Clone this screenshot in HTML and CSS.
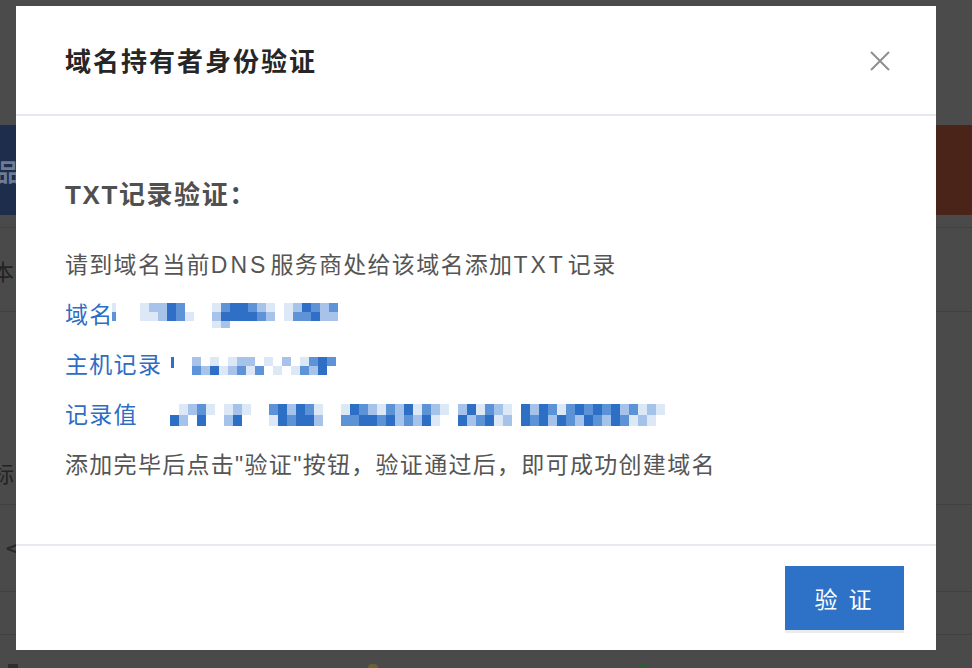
FILE: index.html
```html
<!DOCTYPE html>
<html lang="zh-CN">
<head>
<meta charset="utf-8">
<title>域名持有者身份验证</title>
<link rel="stylesheet" href="styles.css">
</head>
<body>
<div class="page">
  <div class="bg">
    <div class="bg-top"></div>
    <div class="bg-band">
      <div class="band-l"><span class="band-ch">品</span></div>
      <div class="band-r"></div>
    </div>
    <div class="bg-row r1"></div>
    <div class="bg-row r2"><span class="bg-ch">本</span></div>
    <div class="bg-row r3"><span class="bg-ch">标</span></div>
    <div class="bg-row r4"><span class="bg-arrow">&lt;</span></div>
    <div class="bg-row r5"></div>
    <div class="bg-foot">
      <span class="bf-box"></span>
      <span class="bf-dot yellow"></span>
      <span class="bf-dot green"></span>
    </div>
  </div>

  <div class="modal">
    <div class="modal-head">
      <h1 class="modal-title">域名持有者身份验证</h1>
      <button class="close" aria-label="关闭">
        <svg width="22" height="22" viewBox="0 0 22 22"><path d="M2 2L20 20M20 2L2 20" stroke="#8f8f8f" stroke-width="2" fill="none"/></svg>
      </button>
    </div>
    <div class="modal-body">
      <h2 class="sub">TXT记录验证：</h2>
      <p class="line">请到域名当前<span class="lat">DNS</span>服务商处给该域名添加<span class="lat">TXT</span>记录</p>
      <p class="line blue"><span>域名</span>
        <svg class="mosaic m-domain" width="232" height="28" viewBox="0 0 232 28">
          <path fill="#dde8f7" d="M0 2h4v9h-4zM28 2h9v9h-9zM100 2h9v9h-9zM154 2h9v9h-9zM172 2h9v9h-9zM28 11h9v9h-9zM37 11h9v9h-9zM73 11h9v9h-9zM172 11h9v9h-9zM100 20h9v7h-9z"/>
          <path fill="#a7c3ea" d="M37 2h9v9h-9zM46 2h9v9h-9zM145 2h9v9h-9zM181 2h9v9h-9zM208 2h9v9h-9zM46 11h9v9h-9zM100 11h9v9h-9zM154 11h9v9h-9zM208 11h9v9h-9zM217 11h9v9h-9zM109 20h9v7h-9z"/>
          <path fill="#5e93d7" d="M64 2h9v9h-9zM109 2h9v9h-9zM136 2h9v9h-9zM199 2h9v9h-9zM217 2h9v9h-9zM0 11h4v9h-4zM64 11h9v9h-9zM145 11h9v9h-9zM181 11h9v9h-9zM190 11h9v9h-9z"/>
          <path fill="#2f6fc6" d="M55 2h9v9h-9zM118 2h9v9h-9zM127 2h9v9h-9zM190 2h9v9h-9zM55 11h9v9h-9zM109 11h9v9h-9zM118 11h9v9h-9zM127 11h9v9h-9zM136 11h9v9h-9zM199 11h9v9h-9z"/>
        </svg>
      </p>
      <p class="line blue"><span>主机记录</span>
        <svg class="mosaic m-host" width="170" height="24" viewBox="0 0 170 24">
          <path fill="#2f6fc6" d="M1 4h3v11h-3zM40 13h9v9h-9zM148 4h9v9h-9zM148 13h9v9h-9z"/>
          <path fill="#5e93d7" d="M139 4h9v9h-9zM157 4h9v9h-9zM22 13h9v9h-9zM67 13h9v9h-9zM85 13h9v9h-9zM130 13h9v9h-9z"/>
          <path fill="#a7c3ea" d="M22 4h9v9h-9zM67 4h9v9h-9zM76 4h9v9h-9zM112 4h9v9h-9zM31 13h9v9h-9zM58 13h9v9h-9zM139 13h9v9h-9z"/>
          <path fill="#dde8f7" d="M40 4h9v9h-9zM58 4h9v9h-9zM94 4h9v9h-9zM130 4h9v9h-9zM49 13h9v9h-9zM76 13h9v9h-9zM103 13h9v9h-9zM121 13h9v9h-9z"/>
        </svg>
      </p>
      <p class="line blue"><span>记录值</span>
        <svg class="mosaic m-value" width="496" height="24" viewBox="0 0 496 24">
          <path fill="#dde8f7" d="M9 1h9v11h-9zM36 1h9v11h-9zM54 1h9v11h-9zM72 1h9v11h-9zM144 1h9v11h-9zM171 1h9v11h-9zM207 1h9v11h-9zM243 1h9v11h-9zM270 1h9v11h-9zM306 1h9v11h-9zM333 1h9v11h-9zM387 1h9v11h-9zM468 1h9v11h-9zM486 1h9v11h-9zM99 12h9v11h-9zM261 12h9v11h-9zM324 12h9v11h-9zM459 12h9v11h-9zM477 12h9v11h-9z"/>
          <path fill="#a5c3ea" d="M18 1h9v11h-9zM63 1h9v11h-9zM117 1h9v11h-9zM198 1h9v11h-9zM225 1h9v11h-9zM261 1h9v11h-9zM288 1h9v11h-9zM324 1h9v11h-9zM360 1h9v11h-9zM450 1h9v11h-9zM477 1h9v11h-9zM9 12h9v11h-9zM54 12h9v11h-9zM144 12h9v11h-9zM225 12h9v11h-9zM243 12h9v11h-9zM297 12h9v11h-9zM333 12h9v11h-9zM378 12h9v11h-9zM405 12h9v11h-9zM432 12h9v11h-9zM468 12h9v11h-9z"/>
          <path fill="#5c92d6" d="M27 1h9v11h-9zM99 1h9v11h-9zM135 1h9v11h-9zM189 1h9v11h-9zM216 1h9v11h-9zM252 1h9v11h-9zM315 1h9v11h-9zM378 1h9v11h-9zM396 1h9v11h-9zM414 1h9v11h-9zM432 1h9v11h-9zM459 1h9v11h-9zM117 12h9v11h-9zM171 12h9v11h-9zM180 12h9v11h-9zM207 12h9v11h-9zM234 12h9v11h-9zM306 12h9v11h-9zM360 12h9v11h-9zM396 12h9v11h-9zM423 12h9v11h-9zM450 12h9v11h-9z"/>
          <path fill="#2e6fc6" d="M108 1h9v11h-9zM126 1h9v11h-9zM180 1h9v11h-9zM234 1h9v11h-9zM297 1h9v11h-9zM351 1h9v11h-9zM369 1h9v11h-9zM405 1h9v11h-9zM423 1h9v11h-9zM441 1h9v11h-9zM0 12h9v11h-9zM27 12h9v11h-9zM63 12h9v11h-9zM108 12h9v11h-9zM126 12h9v11h-9zM135 12h9v11h-9zM189 12h9v11h-9zM198 12h9v11h-9zM216 12h9v11h-9zM252 12h9v11h-9zM288 12h9v11h-9zM315 12h9v11h-9zM351 12h9v11h-9zM369 12h9v11h-9zM387 12h9v11h-9zM414 12h9v11h-9zM441 12h9v11h-9z"/>
        </svg>
      </p>
      <p class="line">添加完毕后点击"验证"按钮，验证通过后，即可成功创建域名</p>
    </div>
    <div class="modal-foot">
      <button class="btn-primary">验 证</button>
    </div>
  </div>
</div>
</body>
</html>
```
FILE: styles.css
```css
* { box-sizing: border-box; }
html, body { margin: 0; padding: 0; }
body {
  width: 972px;
  height: 668px;
  overflow: hidden;
  background: #4a4a4a;
  font-family: "Liberation Sans", "Noto Sans CJK SC", sans-serif;
}
.page { position: relative; width: 972px; height: 668px; overflow: hidden; }

/* dimmed page behind the dialog */
.bg { display: flex; flex-direction: column; height: 100%; }
.bg-top { height: 125px; background: #4b4b4b; }
.bg-band { height: 90px; display: flex; }
.band-l { flex: 1; background: #1e2d4c; display: flex; align-items: center; }
.band-ch {
  font-family: "Noto Sans CJK SC", sans-serif;
  font-size: 24px; font-weight: 700; color: #6e7c93;
  margin-left: -4px;
}
.band-r { width: 400px; background: #4a2418; }
.bg-row { border-bottom: 1px solid #414141; display: flex; align-items: center; }
.r1 { height: 13px; }
.r2 { height: 84px; }
.r3 { height: 193px; align-items: flex-end; padding-bottom: 16px; }
.r4 { height: 87px; }
.r5 { height: 43px; }
.bg-ch {
  font-family: "Noto Sans CJK SC", sans-serif;
  font-size: 22px; color: #232323; margin-left: -8px;
}
.bg-arrow { font-size: 26px; color: #2a2a2a; margin-left: 4px; font-family: "DejaVu Sans", sans-serif; }
.bg-foot { flex: 1; display: flex; align-items: flex-end; padding-left: 8px; }
.bf-box { width: 10px; height: 4px; background: #2f2f2f; }
.bf-dot { width: 10px; height: 4px; border-radius: 5px 5px 0 0; }
.bf-dot.yellow { background: #6a6133; margin-left: 350px; }
.bf-dot.green { background: #2f5b35; margin-left: 260px; }

/* dialog */
.modal {
  position: absolute;
  left: 16px; top: 6px;
  width: 920px; height: 644px;
  background: #fff;
  display: flex; flex-direction: column;
}
.modal-head {
  height: 110px;
  border-bottom: 2px solid #e6e9ee;
  display: flex; align-items: center; justify-content: space-between;
  padding: 0 45px 0 49px;
}
.modal-title {
  margin: 0;
  font-family: "Noto Sans CJK SC", sans-serif;
  font-size: 26px; font-weight: 700; color: #262626;
  letter-spacing: 2px;
  padding-bottom: 2px;
}
.close {
  border: 0; background: none; padding: 0; width: 22px; height: 22px;
  display: flex; align-items: center; justify-content: center;
  margin-top: 2px;
}
.modal-body {
  padding: 54px 49px 54px;
  border-bottom: 2px solid #e6e9ee;
  flex: 0 0 auto;
}
.sub {
  margin: 0 0 20px;
  font-family: "Liberation Sans", "Noto Sans CJK SC", sans-serif;
  font-size: 26px; font-weight: 700; color: #505050;
  line-height: 50px;
  letter-spacing: 1.6px;
}
.line {
  margin: 0;
  font-size: 23px; color: #555;
  line-height: 50px; height: 50px;
  letter-spacing: 1.3px;
  display: flex; align-items: center;
  white-space: nowrap;
}
.lat { letter-spacing: 3px; margin-right: 2px; }
.blue { color: #2d6dc4; }
.mosaic { display: block; flex: none; }
.m-domain { margin-left: -2px; }
.m-host { margin-left: 8px; }
.m-value { margin-left: 32px; }

.modal-foot {
  flex: 1;
  display: flex; justify-content: flex-end; align-items: flex-start;
  padding: 20px 32px 0 0;
}
.btn-primary {
  width: 119px; height: 64px;
  border: 0; border-radius: 0;
  background: #2e72c8;
  color: #fff;
  font-family: "Noto Sans CJK SC", sans-serif;
  font-size: 23px;
  letter-spacing: 3px;
  box-shadow: 0 3px 0 #ececec;
}
```
